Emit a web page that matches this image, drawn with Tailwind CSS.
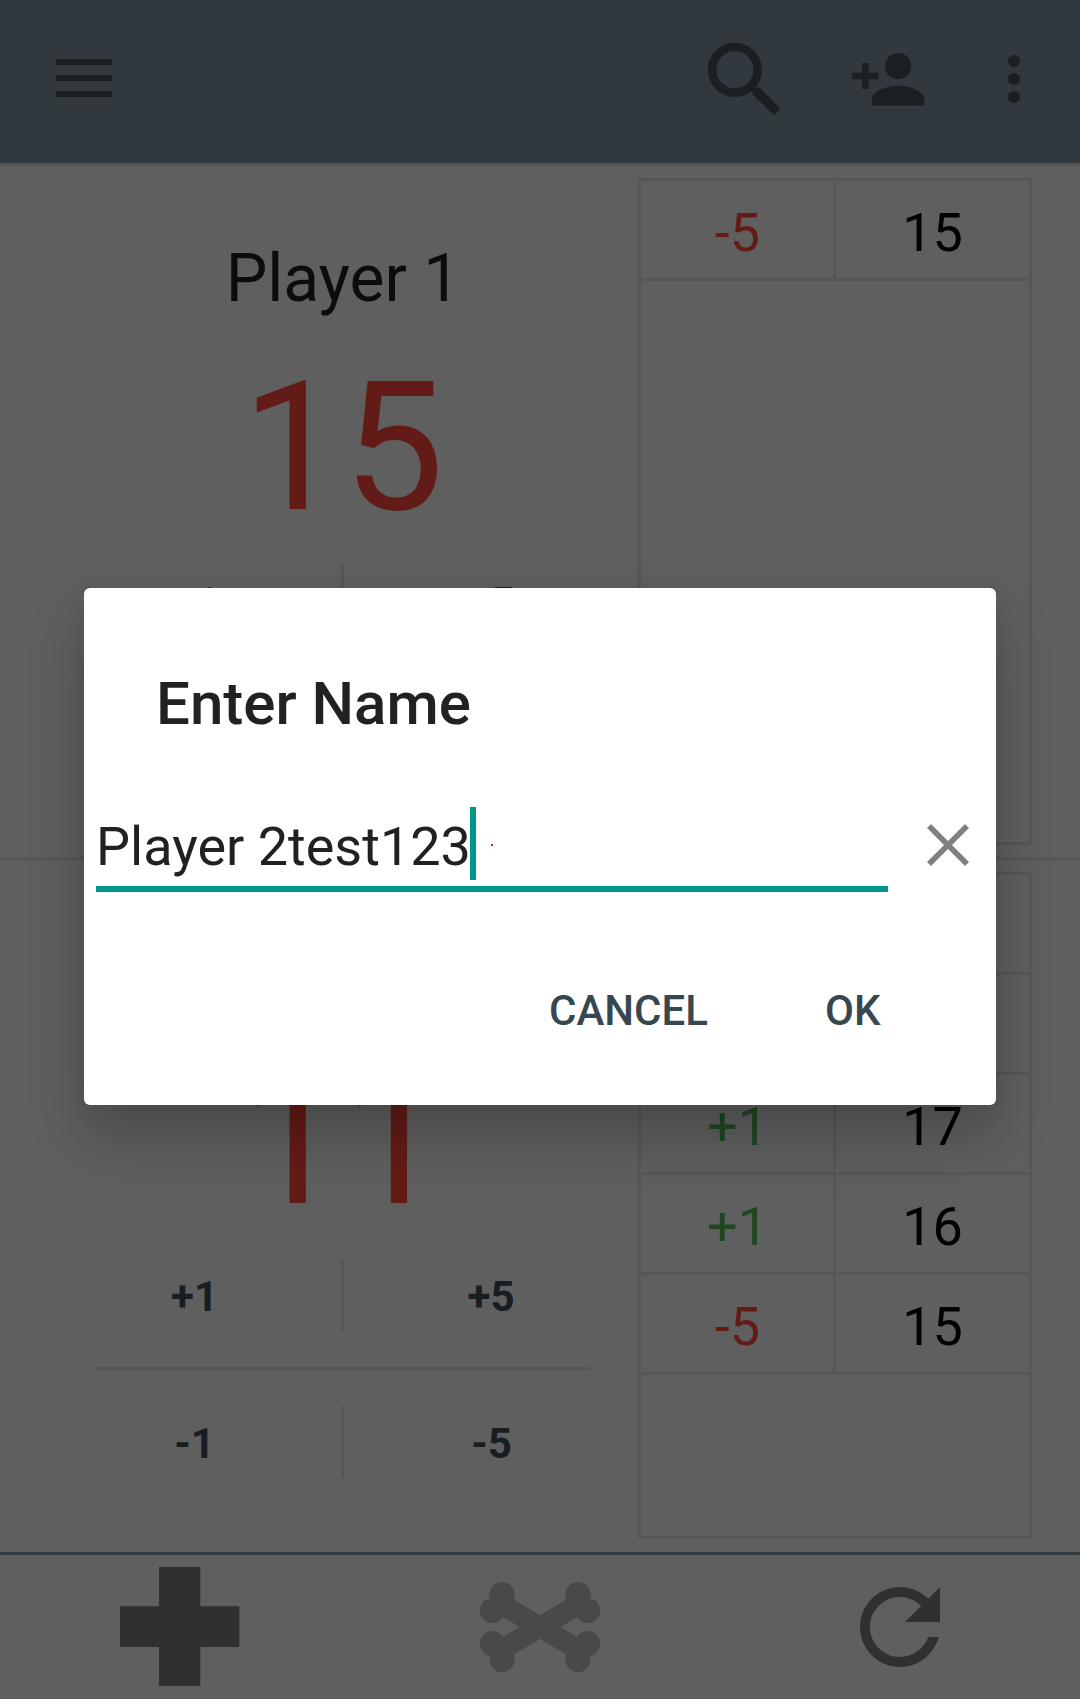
<!DOCTYPE html>
<html lang="en">
<head>
<meta charset="utf-8">
<title>Score counter</title>
<script src="https://cdn.jsdelivr.net/npm/@tailwindcss/browser@4"></script>
</head>
<body class="relative w-[1080px] h-[1699px] overflow-hidden bg-[#5f5f5f] font-[Roboto,sans-serif] text-black flex flex-col">

<header class="h-[163px] shrink-0 bg-[#31383e] text-[#1a1f21] flex items-start">
  <svg class="ml-[56px] mt-[59px] w-[56px] h-[38px]" viewBox="0 0 56 38" fill="currentColor"><path d="M0 0h56v6H0zM0 16h56v6H0zM0 32h56v6H0z"/></svg>
  <svg class="ml-[596px] mt-[42px] w-[72px] h-[74px]" viewBox="0 0 72 74" fill="none" stroke="currentColor"><circle cx="26.9" cy="27.8" r="22.8" stroke-width="8.4"/><path d="M43 45.500h8.500L72 66.800l-6 6.400L45 53z" fill="currentColor" stroke="none"/></svg>
  <svg class="ml-[68.7px] mt-[39.6px] w-[78.6px] h-[78.6px]" viewBox="0 0 24 24" fill="currentColor"><path d="M15 12c2.21 0 4-1.79 4-4s-1.79-4-4-4-4 1.79-4 4 1.79 4 4 4zm-9-2V7H4v3H1v2h3v3h2v-3h3v-2H6zm9 4c-2.67 0-8 1.34-8 4v2h16v-2c0-2.66-5.33-4-8-4z"/></svg>
  <svg class="ml-[80.7px] mt-[55px] w-[12px] h-[48px]" viewBox="0 0 12 48" fill="currentColor"><circle cx="6" cy="6" r="6"/><circle cx="6" cy="24" r="6"/><circle cx="6" cy="42" r="6"/></svg>
</header>

<main class="flex flex-col">
  <section class="h-[694px] border-t-3 border-[#565656] flex pl-[48px] pr-[48px] pt-[12px]">
    <div class="w-[590px] flex flex-col items-center">
      <div class="mt-[61px] h-[80px] leading-[80px] text-[66px] text-[#0c0c0c]">Player 1</div>
      <div class="mt-[29px] h-[200px] leading-[200px] text-[180px] text-[#631b17]">15</div>
      <div class="-mt-[19px] w-full flex flex-col text-[42px] font-bold text-[#171d20]">
        <div class="h-[144px] flex items-center"><span class="w-[293px] text-center pt-[3px]">+1</span><i class="w-[3px] h-[72px] bg-[#565656]"></i><span class="w-[294px] text-center pt-[3px]">+5</span></div>
        <div class="mx-[48px] h-[3px] bg-[#565656]"></div>
        <div class="h-[144px] flex items-center"><span class="w-[293px] text-center pt-[3px]">-1</span><i class="w-[3px] h-[72px] bg-[#565656]"></i><span class="w-[294px] text-center pt-[3px]">-5</span></div>
      </div>
    </div>
    <div class="w-[394px] h-[667px] border-3 border-[#565656] text-[54px]">
      <div class="h-[100px] border-b-3 border-[#565656] grid grid-cols-[195px_193px] text-center leading-[91px]"><span class="border-r-3 border-[#565656] pt-[6px] pl-px text-[#631b17]">-5</span><span class="pt-[6px]">15</span></div>
    </div>
  </section>

  <section class="h-[695px] border-t-3 border-[#565656] flex pl-[48px] pr-[48px] pt-[12px]">
    <div class="w-[590px] flex flex-col items-center">
      <div class="mt-[61px] h-[80px] leading-[80px] text-[66px] text-[#0c0c0c]">Player 2</div>
      <div class="mt-[29px] h-[200px] leading-[200px] text-[180px] text-[#631b17]">11</div>
      <div class="-mt-[19px] w-full flex flex-col text-[42px] font-bold text-[#171d20]">
        <div class="h-[144px] flex items-center"><span class="w-[293px] text-center pt-[3px]">+1</span><i class="w-[3px] h-[72px] bg-[#565656]"></i><span class="w-[294px] text-center pt-[3px]">+5</span></div>
        <div class="mx-[48px] h-[3px] bg-[#565656]"></div>
        <div class="h-[144px] flex items-center"><span class="w-[293px] text-center pt-[3px]">-1</span><i class="w-[3px] h-[72px] bg-[#565656]"></i><span class="w-[294px] text-center pt-[3px] pl-px">-5</span></div>
      </div>
    </div>
    <div class="w-[394px] h-[667px] border-3 border-[#565656] text-[54px]">
      <div class="h-[100px] border-b-3 border-[#565656] grid grid-cols-[195px_193px] text-center leading-[91px]"><span class="border-r-3 border-[#565656] pt-[6px] pl-px text-[#631b17]">-5</span><span class="pt-[6px]">11</span></div>
      <div class="h-[100px] border-b-3 border-[#565656] grid grid-cols-[195px_193px] text-center leading-[91px]"><span class="border-r-3 border-[#565656] pt-[6px] pl-px text-[#631b17]">-1</span><span class="pt-[6px]">16</span></div>
      <div class="h-[100px] border-b-3 border-[#565656] grid grid-cols-[195px_193px] text-center leading-[91px]"><span class="border-r-3 border-[#565656] pt-[6px] pl-px text-[#1f4721]">+1</span><span class="pt-[6px]">17</span></div>
      <div class="h-[100px] border-b-3 border-[#565656] grid grid-cols-[195px_193px] text-center leading-[91px]"><span class="border-r-3 border-[#565656] pt-[6px] pl-px text-[#1f4721]">+1</span><span class="pt-[6px]">16</span></div>
      <div class="h-[100px] border-b-3 border-[#565656] grid grid-cols-[195px_193px] text-center leading-[91px]"><span class="border-r-3 border-[#565656] pt-[6px] pl-px text-[#631b17]">-5</span><span class="pt-[6px]">15</span></div>
    </div>
  </section>
</main>

<footer class="h-[147px] border-t-3 border-[#2f3b3f] grid grid-cols-3 place-items-center text-[#303030]">
  <svg class="w-[120px] h-[120px]" viewBox="0 0 120 120" fill="currentColor"><path d="M39 0h41.3v39.3h39V80h-39v39H39V80H0V39.3h39z"/></svg>
  <svg class="w-[120px] h-[120px] text-[#494949]" viewBox="0 0 120 120" fill="currentColor">
    <path d="M22 25.400 60 48.200 98 25.400 107.500 43.800 80.500 60 107.500 76.200 98 94.600 60 71.800 22 94.600 12.500 76.200 39.500 60 12.500 43.800z"/>
    <circle cx="22" cy="27.500" r="12.600"/><circle cx="12.500" cy="43.500" r="12.600"/>
    <circle cx="98" cy="27.500" r="12.600"/><circle cx="107.500" cy="43.500" r="12.600"/>
    <circle cx="22" cy="92.500" r="12.600"/><circle cx="12.500" cy="76.500" r="12.600"/>
    <circle cx="98" cy="92.500" r="12.600"/><circle cx="107.500" cy="76.500" r="12.600"/>
  </svg>
  <svg class="w-[120px] h-[120px]" viewBox="0 0 24 24" fill="currentColor"><path d="M17.65 6.350C16.200 4.900 14.210 4 12 4c-4.420 0-7.990 3.580-7.990 8s3.570 8 7.990 8c3.730 0 6.840-2.550 7.730-6h-2.080c-.820 2.330-3.040 4-5.650 4-3.310 0-6-2.690-6-6s2.690-6 6-6c1.660 0 3.140.690 4.220 1.780L13 11h7V4l-2.350 2.350z"/></svg>
</footer>

<div role="dialog" class="absolute left-[84px] top-[588px] w-[912px] h-[517px] rounded-[6px] bg-white shadow-[0_32px_56px_rgba(0,0,0,0.22),0_0_20px_rgba(0,0,0,0.05)] flex flex-col text-[#212121]">
  <h1 class="ml-[72px] mt-[76px] h-[80px] leading-[80px] text-[60px] font-medium">Enter Name</h1>
  <div class="ml-[12px] mt-[63px] h-[85px] flex">
    <div class="w-[792px] h-[85px] border-b-6 border-[#009688] flex items-start text-[54px]">
      <span class="leading-[79px] w-[374px] whitespace-nowrap">Player 2test123</span>
      <i class="w-[6px] h-[73px] bg-[#009688]"></i>
      <i class="ml-[15px] mt-[37px] w-[2px] h-[2px] bg-[#e0103a]"></i>
    </div>
    <svg class="ml-[39px] mt-[17px] w-[42px] h-[42px]" viewBox="0 0 42 42" stroke="#808080" stroke-width="5.600"><path d="M2 2l38 38M40 2 2 40"/></svg>
  </div>
  <div class="mt-[87px] h-[64px] flex leading-[64px] text-[42px] font-medium text-[#37474f]">
    <span class="ml-[465px] w-[276px]">CANCEL</span><span>OK</span>
  </div>
</div>
</body>
</html>
